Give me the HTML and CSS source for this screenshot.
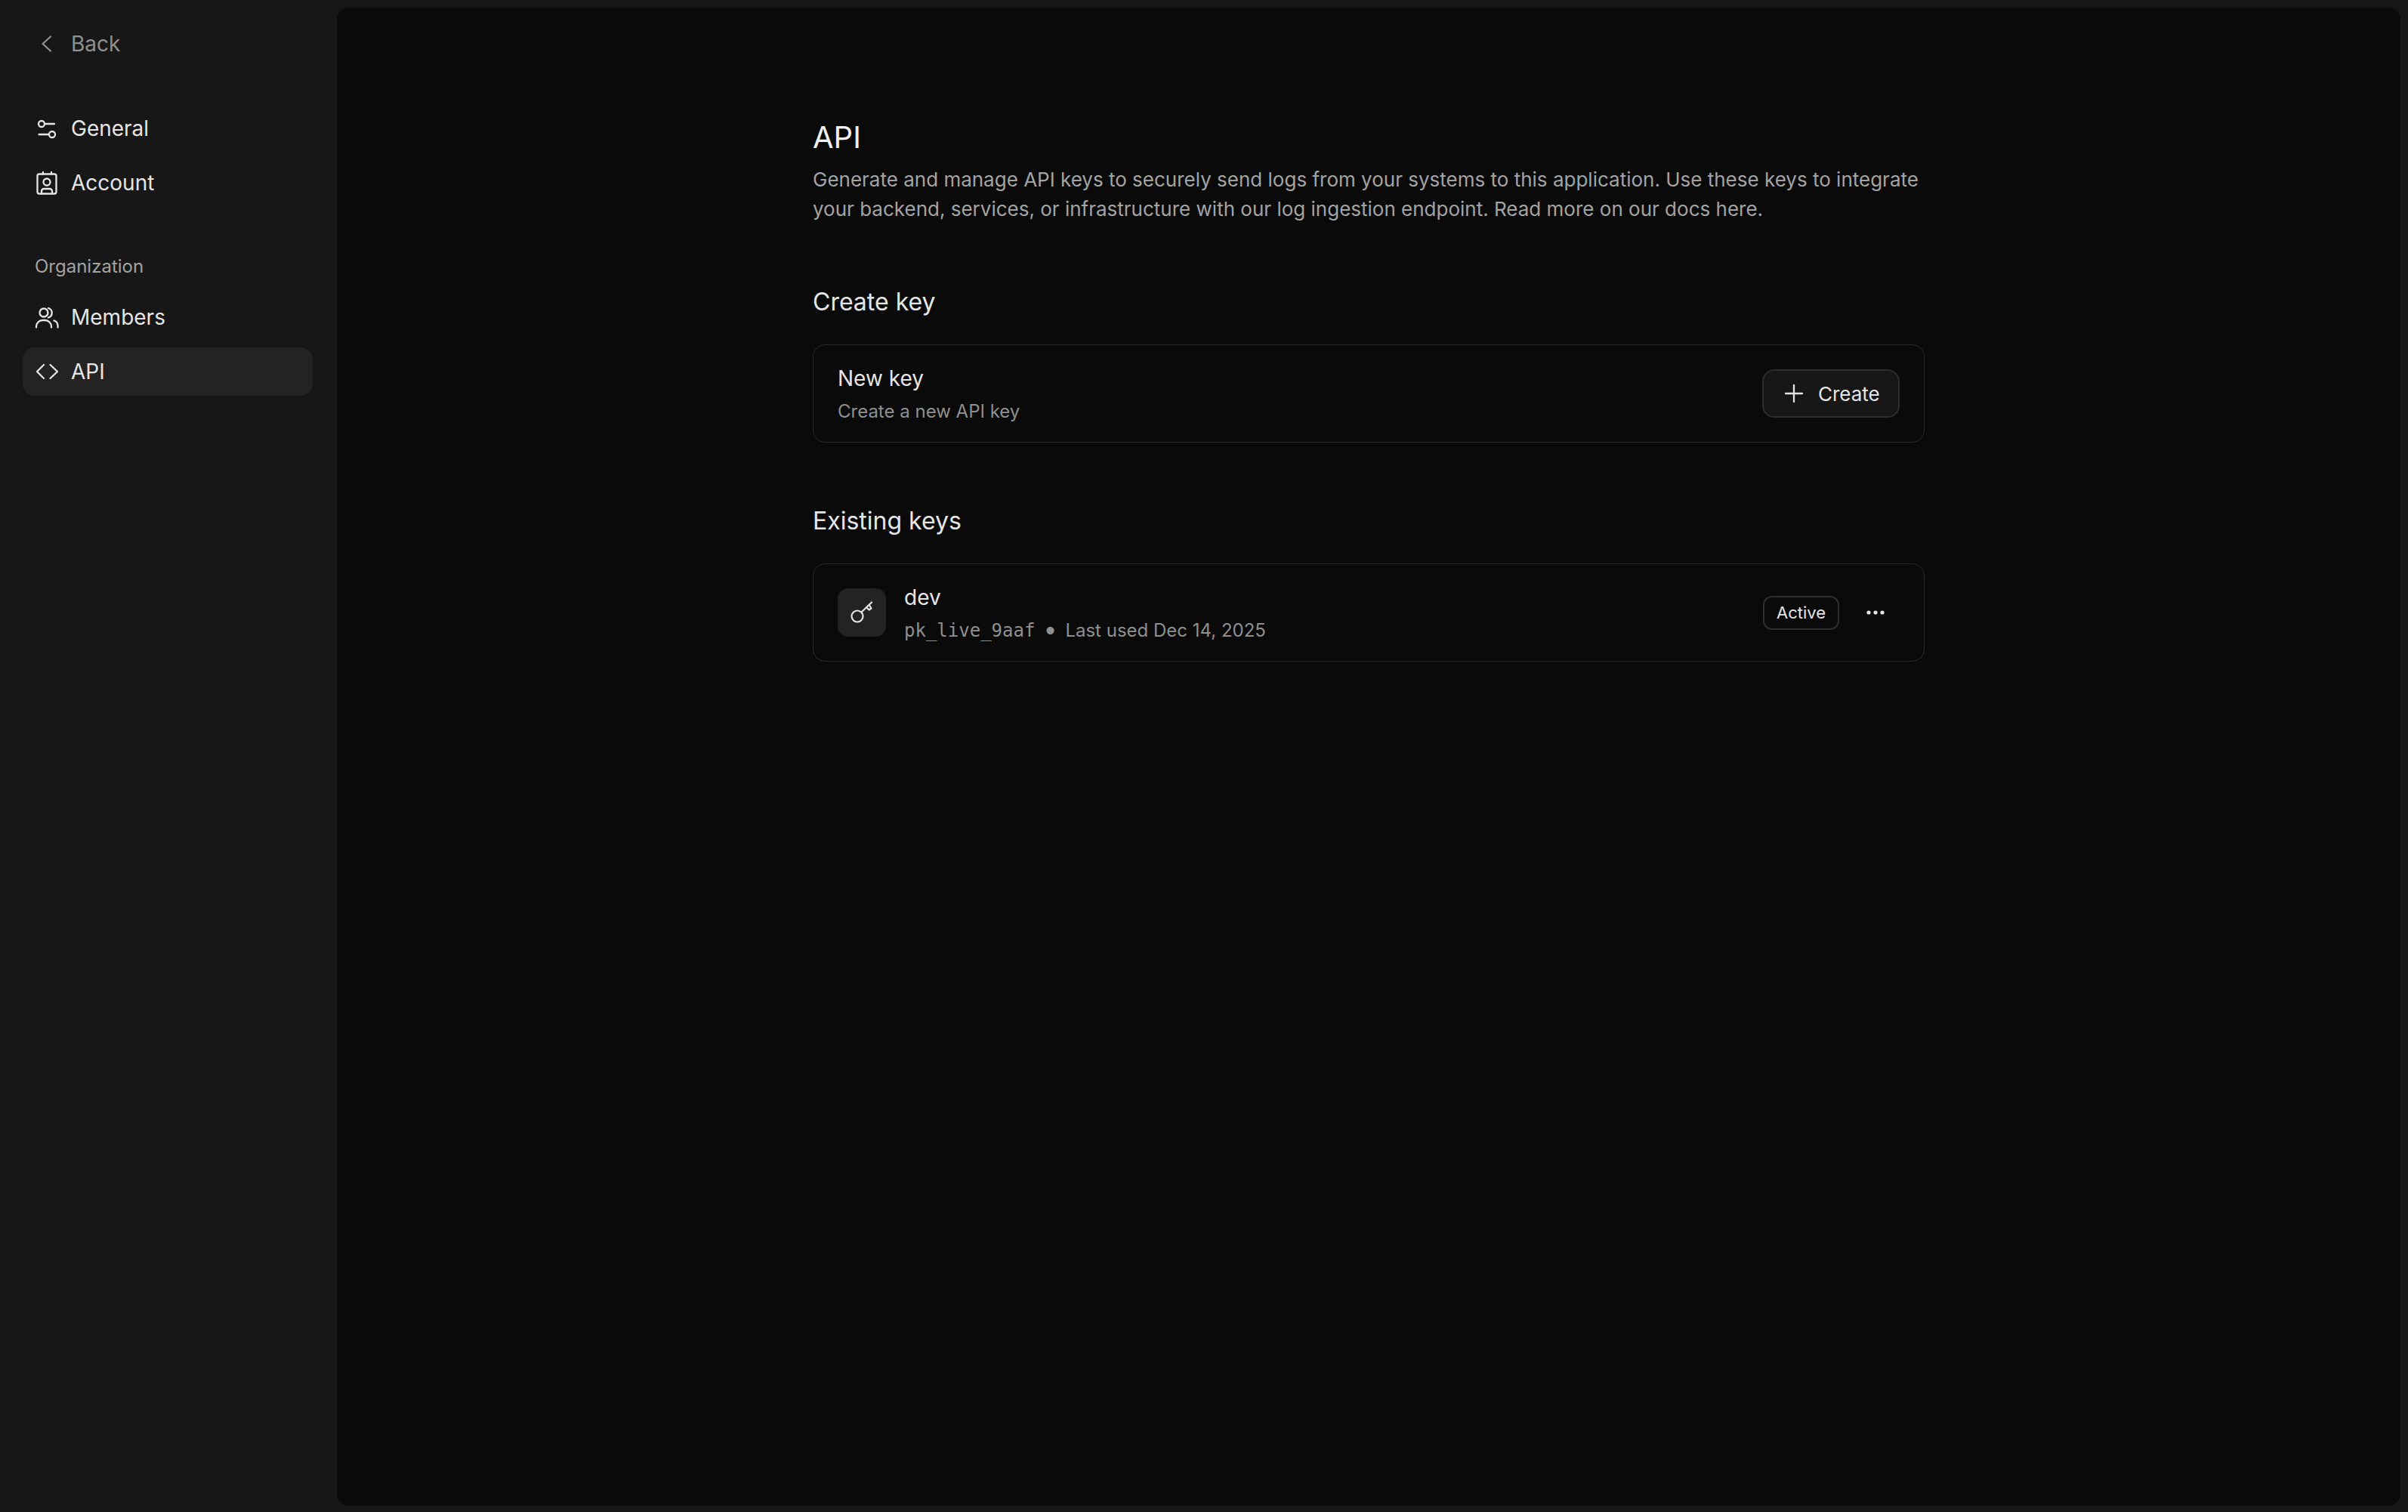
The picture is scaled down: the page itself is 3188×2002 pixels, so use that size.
FILE: index.html
```html
<!DOCTYPE html>
<html lang="en">
<head>
<meta charset="utf-8">
<title>API</title>
<link rel="stylesheet" href="styles.css">
</head>
<body>
<aside class="sidebar">
  <a class="nav-item back">
    <svg class="icon" viewBox="0 0 32 32"><path d="M21 6.500L10.500 16 21 25.500"/></svg>
    <span>Back</span>
  </a>
  <nav class="nav-group">
    <a class="nav-item">
      <svg class="icon" viewBox="0 0 32 32"><circle cx="9" cy="10" r="4"/><path d="M13.500 10H26M5.500 24H18"/><circle cx="23" cy="24" r="4"/></svg>
      <span>General</span>
    </a>
    <a class="nav-item">
      <svg class="icon" viewBox="0 0 32 32"><rect x="3.500" y="4.500" width="25" height="26" rx="2.500"/><path d="M11 2V4.500M22 2V4.500"/><circle cx="16" cy="15" r="4.500"/><path d="M9 30.500v-3.500a3 3 0 0 1 3-3h8a3 3 0 0 1 3 3v3.500"/></svg>
      <span>Account</span>
    </a>
  </nav>
  <div class="nav-label">Organization</div>
  <nav class="nav-group">
    <a class="nav-item">
      <svg class="icon" viewBox="0 0 32 32"><circle cx="12" cy="10" r="5.500"/><path d="M2 29.500v-1a8.500 8.500 0 0 1 8.500-8.500h3a8.500 8.500 0 0 1 8.500 8.500v1M18 4a6.500 6.500 0 0 1 0 12.500M25.500 20.500a7 7 0 0 1 5 6.500v2.500"/></svg>
      <span>Members</span>
    </a>
    <a class="nav-item active">
      <svg class="icon" viewBox="0 0 32 32"><path d="M12 7L3 16l9 9M20.500 7l9.500 9-9.500 9"/></svg>
      <span>API</span>
    </a>
  </nav>
</aside>
<main class="main">
  <div class="content">
    <header class="page-head">
      <h1>API</h1>
      <p>Generate and manage API keys to securely send logs from your systems to this application. Use these keys to integrate your backend, services, or infrastructure with our log ingestion endpoint. Read more on our docs here.</p>
    </header>
    <section class="section">
      <h2>Create key</h2>
      <div class="card">
        <div class="card-text">
          <div class="card-title">New key</div>
          <div class="card-sub">Create a new API key</div>
        </div>
        <button class="btn">
          <svg class="icon" viewBox="0 0 32 32"><path d="M16 5v22M5 16h22"/></svg>
          <span>Create</span>
        </button>
      </div>
    </section>
    <section class="section">
      <h2>Existing keys</h2>
      <div class="card">
        <div class="key-tile">
          <svg class="icon key" viewBox="0 0 32 32"><circle cx="10" cy="21" r="7.500"/><path d="M15.500 15.500L29 2.500M22 9l3.500 3.500 3-2-2.500-4"/></svg>
        </div>
        <div class="card-text">
          <div class="card-title">dev</div>
          <div class="card-sub"><code>pk_live_9aaf</code><span class="dot">•</span><span>Last used Dec 14, 2025</span></div>
        </div>
        <span class="badge">Active</span>
        <button class="more" aria-label="More">
          <svg viewBox="0 0 32 32"><circle cx="7" cy="16" r="2.600"/><circle cx="16" cy="16" r="2.600"/><circle cx="25" cy="16" r="2.600"/></svg>
        </button>
      </div>
    </section>
  </div>
</main>
</body>
</html>
```
FILE: styles.css
```css
* { box-sizing: border-box; }
html, body { height: 100%; }
body {
  margin: 0;
  display: flex;
  background: #171717;
  color: #e5e5e5;
  font-family: Inter, "Liberation Sans", sans-serif;
  font-size: 28px;
  overflow: hidden;
}
.icon {
  width: 32px;
  height: 32px;
  flex: none;
  fill: none;
  stroke: currentColor;
  stroke-width: 2.300;
  stroke-linecap: round;
  stroke-linejoin: round;
}
.icon.key { stroke-width: 2.200; }
.sidebar {
  width: 446px;
  flex: none;
  padding: 26px 32px 0 30px;
}
.nav-group {
  display: flex;
  flex-direction: column;
  gap: 8px;
}
.nav-item {
  display: flex;
  align-items: center;
  gap: 16px;
  height: 64px;
  padding: 0 16px;
  border-radius: 16px;
  color: #e5e5e5;
}
.nav-item.back {
  color: #8f8f8f;
  margin-bottom: 48px;
}
.nav-item.active { background: #232323; }
.nav-label {
  margin: 57px 0 13px 16px;
  height: 44px;
  line-height: 44px;
  font-size: 24px;
  color: #a3a3a3;
}
.main {
  flex: 1;
  margin: 10px 10px 8px 0;
  background: #0a0a0a;
  border-radius: 16px;
  display: flex;
  justify-content: center;
}
.content {
  width: 1472px;
  padding-top: 144px;
}
h1 {
  margin: 0;
  font-size: 40px;
  line-height: 56px;
  font-weight: 400;
  color: #f0f0f0;
}
.page-head p {
  margin: 9px 0 0;
  font-size: 26px;
  line-height: 38.500px;
  color: #a3a3a3;
}
.section { margin-top: 80px; }
h2 {
  margin: 0 0 32px;
  font-size: 32px;
  line-height: 48px;
  font-weight: 400;
  color: #e5e5e5;
}
.card {
  display: flex;
  align-items: center;
  height: 130px;
  padding: 0 32px;
  border: 1px solid #2a2a2a;
  border-radius: 16px;
}
.card-text {
  flex: 1;
  display: flex;
  flex-direction: column;
  gap: 6px;
  padding-top: 1px;
}
.card-title { font-size: 28px; line-height: 40px; color: #e5e5e5; }
.card-sub {
  display: flex;
  align-items: center;
  height: 36px;
  font-size: 24px;
  line-height: 36px;
  color: #8f8f8f;
}
.card-sub code {
  font-family: "DejaVu Sans Mono", monospace;
  font-size: 24px;
}
.dot {
  width: 40px;
  height: 36px;
  text-align: center;
  font-size: 32px;
  line-height: 32px;
}
.btn {
  display: flex;
  align-items: center;
  gap: 16px;
  width: 182px;
  height: 64px;
  padding: 0 24px;
  background: #171717;
  border: 2px solid #2e2e2e;
  border-radius: 16px;
  color: #e5e5e5;
  font: inherit;
  font-size: 26px;
}
.key-tile {
  width: 64px;
  height: 64px;
  margin-right: 24px;
  display: flex;
  align-items: center;
  justify-content: center;
  background: #232323;
  border-radius: 14px;
}
.badge {
  display: flex;
  align-items: center;
  justify-content: center;
  width: 101px;
  height: 45px;
  border: 2px solid #2e2e2e;
  border-radius: 12px;
  font-size: 22px;
  color: #e5e5e5;
}
.more {
  width: 64px;
  height: 64px;
  margin-left: 16px;
  padding: 16px;
  background: none;
  border: none;
}
.more svg { display: block; width: 32px; height: 32px; fill: #e5e5e5; }
```
